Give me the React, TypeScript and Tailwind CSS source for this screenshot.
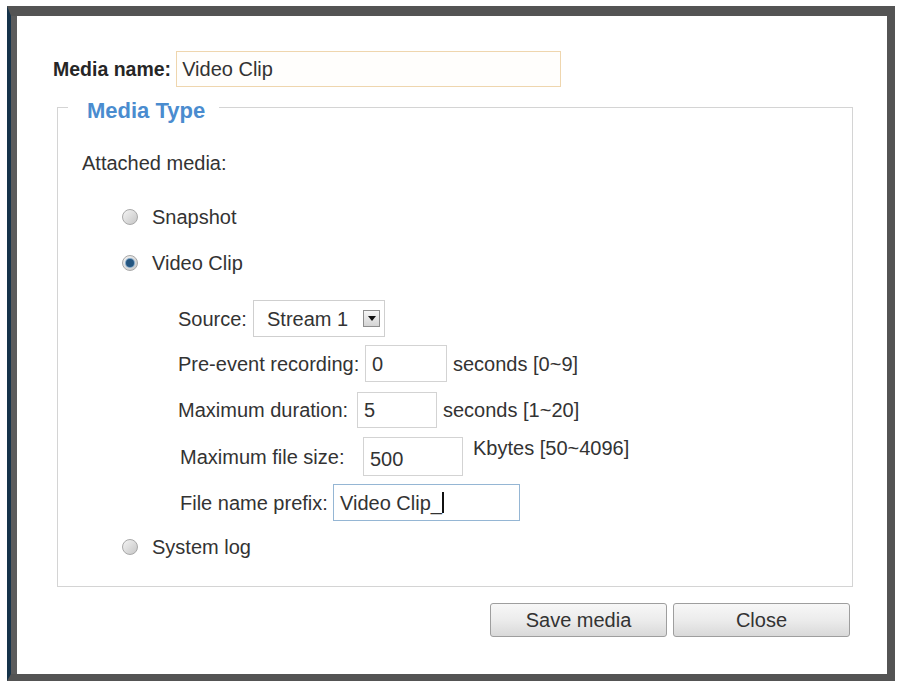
import React from "react";

const Radio = ({ checked }: { checked?: boolean }) => (
  <span className="w-[16px] h-[16px] rounded-full border border-[#a8a8a8] bg-linear-to-br from-[#f4f4f4] to-[#c6c6c6] flex items-center justify-center shrink-0">
    {checked && <span className="w-[8px] h-[8px] rounded-full bg-[#24557f] ring-1 ring-[#7ea6c8]" />}
  </span>
);

const RadioRow = ({ label, checked, className }: { label: string; checked?: boolean; className: string }) => (
  <div className={`flex items-center h-[24px] ml-[40px] ${className}`}>
    <Radio checked={checked} />
    <span className="ml-[14px]">{label}</span>
  </div>
);

const Field = ({ w, value, low }: { w: string; value: string; low?: boolean }) => (
  <div className={`${w} h-full border border-[#d3d3d3] bg-white flex items-center pl-[6px] ${low ? "pt-[4px]" : ""}`}>
    {value}
  </div>
);

export default function App() {
  return (
    <div className="w-[898px] h-[681px] bg-white pt-[6px] pl-[7px] pr-[3px] font-['Liberation_Sans',Arial,sans-serif] text-[20px] leading-[24px] text-[#333]">
      <div className="h-[675px] border-t-[10px] border-r-[8px] border-b-[7px] border-l-[4px] border-[#545454] border-l-[#16334a]">
        <div className="h-full border-l-[6px] border-[#5c5c5c] bg-white pt-[35px]">
          {/* Media name */}
          <div className="flex items-center pl-[36px]">
            <span className="font-bold text-[19.5px] text-[#262626]">Media name:</span>
            <div className="ml-[5px] w-[385px] h-[36px] border border-[#efd6ae] bg-[#fffefc] flex items-center pl-[5px]">
              Video Clip
            </div>
          </div>

          {/* Media Type */}
          <fieldset className="mt-[3px] ml-[40px] w-[796px] border border-[#d4d4d4]">
            <legend className="ml-[10px] pl-[19px] pr-[14px] pt-[8px] text-[22px] leading-[26px] font-bold text-[#4a8ccf]">
              Media Type
            </legend>
            <div className="pl-[24px] pt-[27px] pb-[27px]">
              <div>Attached media:</div>
              <RadioRow label="Snapshot" className="mt-[30px]" />
              <RadioRow label="Video Clip" checked className="mt-[22px]" />

              <div className="ml-[96px]">
                <div className="flex items-center h-[37px] mt-[25px]">
                  <span className="w-[75px]">Source:</span>
                  <div className="w-[132px] h-full border border-[#cfcfcf] bg-white flex items-center pl-[13px]">
                    <span>Stream 1</span>
                    <span className="ml-auto mr-[4px] w-[17px] h-[17px] border border-[#8e8e8e] bg-linear-to-b from-[#f6f6f6] to-[#d4d4d4] flex items-center justify-center">
                      <svg width="8" height="5" viewBox="0 0 8 5">
                        <polygon points="0,0 8,0 4,5" fill="#111" />
                      </svg>
                    </span>
                  </div>
                </div>

                <div className="flex items-center h-[37px] mt-[8px]">
                  <span className="w-[187px]">Pre-event recording:</span>
                  <Field w="w-[82px]" value="0" />
                  <span className="ml-[6px]">seconds [0~9]</span>
                </div>

                <div className="flex items-center h-[36px] mt-[10px]">
                  <span className="w-[179px]">Maximum duration:</span>
                  <Field w="w-[80px]" value="5" />
                  <span className="ml-[6px]">seconds [1~20]</span>
                </div>

                <div className="flex items-center h-[39px] mt-[9px] ml-[2px]">
                  <span className="w-[183px]">Maximum file size:</span>
                  <Field w="w-[100px]" value="500" low />
                  <span className="ml-[10px] mb-[18px]">Kbytes [50~4096]</span>
                </div>

                <div className="flex items-center h-[37px] mt-[8px] ml-[2px]">
                  <span className="w-[153px]">File name prefix:</span>
                  <div className="w-[187px] h-full border border-[#95b6d4] bg-white flex items-center pl-[6px]">
                    <span>Video Clip_</span>
                    <span className="w-[2px] h-[21px] bg-[#111]" />
                  </div>
                </div>
              </div>

              <RadioRow label="System log" className="mt-[14px]" />
            </div>
          </fieldset>

          {/* Buttons */}
          <div className="flex justify-end gap-[6px] pr-[37px] mt-[16px]">
            <button className="w-[177px] h-[34px] rounded-[3px] border border-[#9e9e9e] bg-linear-to-b from-[#f7f7f7] via-[#ececec] to-[#d9d9d9] text-[#333]">
              Save media
            </button>
            <button className="w-[177px] h-[34px] rounded-[3px] border border-[#9e9e9e] bg-linear-to-b from-[#f7f7f7] via-[#ececec] to-[#d9d9d9] text-[#333]">
              Close
            </button>
          </div>
        </div>
      </div>
    </div>
  );
}
